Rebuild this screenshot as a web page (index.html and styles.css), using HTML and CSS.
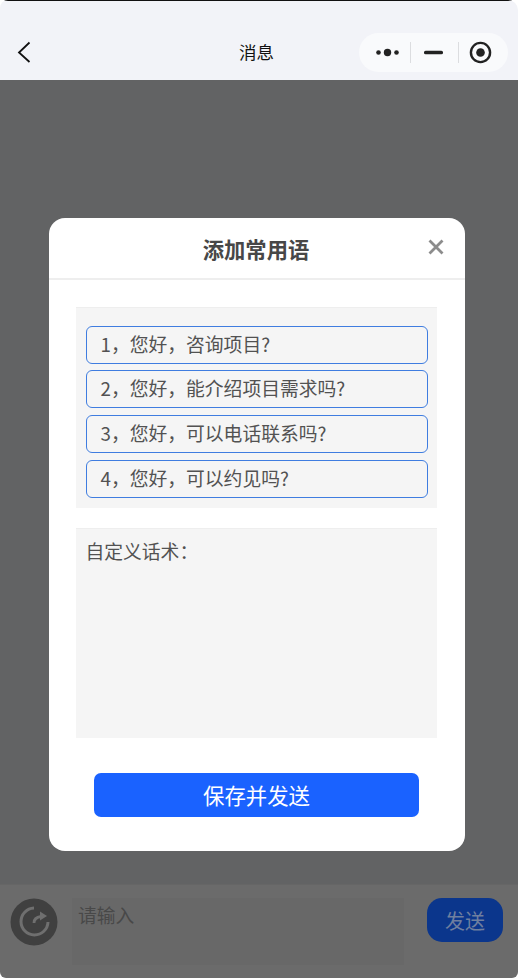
FILE: index.html
```html
<!DOCTYPE html>
<html lang="zh">
<head>
<meta charset="utf-8">
<title>消息</title>
<link rel="stylesheet" href="styles.css">
</head>
<body>
<div class="app">
  <header class="topbar">
    <svg class="back" viewBox="0 0 14 22" width="14" height="22"><path d="M12.500 1.500 2 11.500 12.500 21" fill="none" stroke="#111" stroke-width="1.800"/></svg>
    <h1 class="page-title">消息</h1>
    <div class="capsule">
      <svg class="cap-dots" viewBox="0 0 23 9" width="23" height="9"><circle cx="2.500" cy="4.500" r="2.300" fill="#222"/><circle cx="11.500" cy="4.500" r="3.700" fill="#222"/><circle cx="20.500" cy="4.500" r="2.300" fill="#222"/></svg>
      <span class="cap-sep cap-sep-a"></span>
      <svg class="cap-minus" viewBox="0 0 19 5" width="19" height="5"><rect x="0" y="0.700" width="19" height="3.600" rx="1.600" fill="#222"/></svg>
      <span class="cap-sep cap-sep-b"></span>
      <svg class="cap-circle" viewBox="0 0 24 24" width="23" height="23"><circle cx="12" cy="12" r="10" fill="none" stroke="#222" stroke-width="2.500"/><circle cx="12" cy="12" r="4.500" fill="#222"/></svg>
    </div>
  </header>

  <main class="stage">
    <section class="modal">
      <div class="modal-head">
        <h2 class="modal-title">添加常用语</h2>
        <svg class="close" viewBox="0 0 16 16" width="16" height="16"><path d="M1.500 1.500 14.500 14.500M14.500 1.500 1.500 14.500" stroke="#8c8c8c" stroke-width="2.800" fill="none"/></svg>
      </div>
      <div class="modal-body">
        <ul class="phrases">
          <li class="phrase">1，您好，咨询项目?</li>
          <li class="phrase">2，您好，能介绍项目需求吗?</li>
          <li class="phrase">3，您好，可以电话联系吗?</li>
          <li class="phrase">4，您好，可以约见吗?</li>
        </ul>
        <div class="custom">自定义话术：</div>
        <button class="save">保存并发送</button>
      </div>
    </section>
  </main>

  <footer class="composer">
    <svg class="refresh" viewBox="0 0 48 48" width="48" height="48">
      <circle cx="24" cy="24" r="23.500" fill="#404040"/>
      <path d="M24 10A13.500 13.500 0 1 0 38 24" fill="none" stroke="#6f6f6f" stroke-width="3"/>
      <path d="M24 25C24 21 27 19 31 18.500" fill="none" stroke="#6f6f6f" stroke-width="2.800"/>
      <path d="M30 13.500 37 18 30 22.500Z" fill="#6f6f6f"/>
    </svg>
    <div class="input">请输入</div>
    <button class="send">发送</button>
  </footer>
</div>
</body>
</html>
```

FILE: styles.css
```css
* { box-sizing: border-box; }
html, body { margin: 0; padding: 0; background: #fff; }
body { font-family: "Noto Sans CJK SC", "Noto Sans", sans-serif; }
ul, h1, h2 { margin: 0; padding: 0; font-weight: normal; }

.app {
  width: 518px;
  height: 978px;
  display: flex;
  flex-direction: column;
  overflow: hidden;
  border-radius: 8px 10px 6px 6px;
}

.topbar {
  height: 80px;
  flex: none;
  background: #f2f3f8;
  border-top: 1px solid #111;
  display: grid;
  grid-template-columns: 137px 1fr 149px;
  align-items: start;
  padding: 32px 10px 0 17px;
}
.back { margin-top: 8px; }
.page-title {
  font-size: 17.500px;
  line-height: 38px;
  color: #111;
  text-align: center;
  margin-top: 0;
}
.capsule {
  width: 149px;
  height: 39px;
  border-radius: 20px;
  background: #f9fafc;
  display: flex;
  align-items: center;
  padding-left: 17px;
}
.cap-sep { width: 1px; height: 21px; background: #dcdde0; }
.cap-sep-a { margin: 0 13px 0 11px; }
.cap-sep-b { margin: 0 10px 0 15px; }

.stage {
  flex: 1;
  background: #626364;
  padding: 138px 53px 0 49px;
}
.modal {
  height: 633px;
  background: #fff;
  border-radius: 16px;
  display: flex;
  flex-direction: column;
}
.modal-head {
  height: 62px;
  border-bottom: 2px solid #eeeeee;
  display: flex;
  align-items: center;
  justify-content: center;
  position: relative;
  padding-right: 2px;
}
.modal-title { font-size: 21.300px; font-weight: 700; color: #474747; }
.close { position: absolute; right: 21px; top: 21px; }
.modal-body {
  flex: 1;
  padding: 27px 28px 0 27px;
  display: flex;
  flex-direction: column;
}
.phrases {
  list-style: none;
  height: 201px;
  background: #f5f5f5;
  border-top: 1px solid #eeeeee;
  padding: 17.700px 9px 0 9.500px;
  display: flex;
  flex-direction: column;
  gap: 6.700px;
}
.phrase {
  height: 38px;
  border: 1px solid #3f7de0;
  border-radius: 6px;
  padding-left: 14px;
  font-size: 18.800px;
  line-height: 34px;
  color: #525252;
}
.custom {
  margin-top: 20px;
  height: 210px;
  background: #f5f5f5;
  border-top: 1px solid #eeeeee;
  padding: 7px 9.500px;
  font-size: 18.800px;
  line-height: 30px;
  color: #525252;
}
.save {
  display: block;
  width: 325px;
  height: 44px;
  margin: 35px 0 0 18px;
  border: 0;
  border-radius: 7px;
  background: #1a62ff;
  color: #fff;
  font: 21.400px/42px "Noto Sans CJK SC", sans-serif;
  padding: 0;
}

.composer {
  height: 94px;
  flex: none;
  background: #6b6b6b;
  border-top: 1px solid #666;
  display: flex;
  align-items: flex-start;
  padding: 13px 15px 0 10px;
}
.refresh { flex: none; }
.input {
  width: 332px;
  height: 67px;
  margin-left: 14px;
  background: #686868;
  color: #484848;
  font-size: 18.800px;
  line-height: 34px;
  padding-left: 6px;
}
.send {
  width: 76px;
  height: 44px;
  margin-left: 23px;
  border: 0;
  border-radius: 15px;
  background: #0b368c;
  color: #6f7f9f;
  font: 20px/46px "Noto Sans CJK SC", sans-serif;
  padding: 0;
}
```
